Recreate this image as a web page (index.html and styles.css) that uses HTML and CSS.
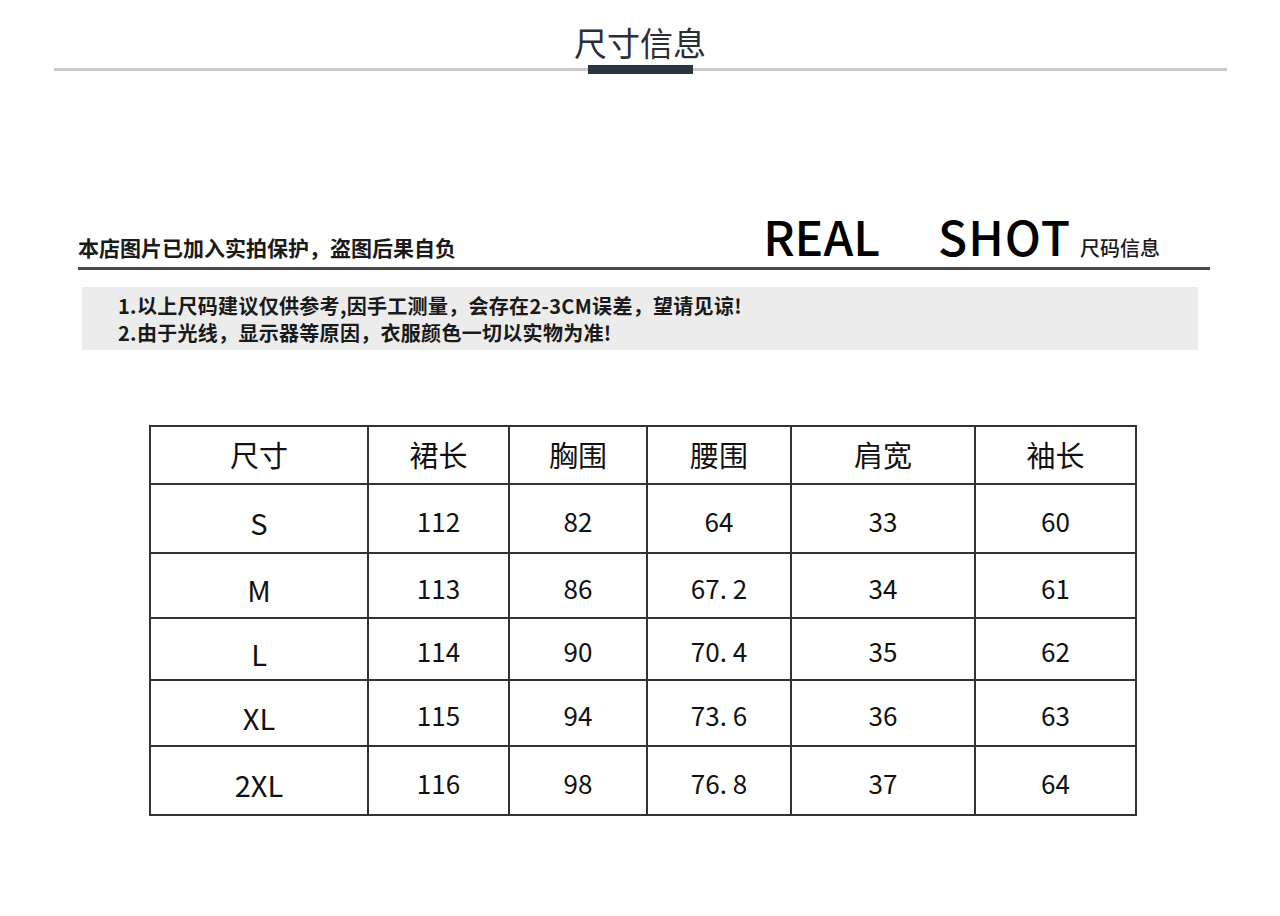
FILE: index.html
```html
<!DOCTYPE html>
<html lang="zh-CN">
<head>
<meta charset="utf-8">
<title>尺寸信息</title>
<link rel="stylesheet" href="styles.css">
</head>
<body>
<div class="page">
  <header class="top">
    <h1 class="title">尺寸信息</h1>
    <div class="title-rule"><span class="bar"></span></div>
  </header>

  <section class="banner">
    <p class="notice">本店图片已加入实拍保护，盗图后果自负</p>
    <div class="real">
      <span class="real-word">REAL</span><span class="real-word shot">SHOT</span><span class="real-sub">尺码信息</span>
    </div>
  </section>

  <div class="tips">
    <p>1.以上尺码建议仅供参考,因手工测量，会存在2-3CM误差，望请见谅!</p>
    <p>2.由于光线，显示器等原因，衣服颜色一切以实物为准!</p>
  </div>

  <table class="sizes">
    <colgroup>
      <col class="c1"><col class="c2"><col class="c3"><col class="c4"><col class="c5"><col class="c6">
    </colgroup>
    <thead>
      <tr class="r0"><th>尺寸</th><th>裙长</th><th>胸围</th><th>腰围</th><th>肩宽</th><th>袖长</th></tr>
    </thead>
    <tbody>
      <tr class="r1"><td class="sz">S</td><td>112</td><td>82</td><td>64</td><td>33</td><td>60</td></tr>
      <tr class="r2"><td class="sz">M</td><td>113</td><td>86</td><td>67. 2</td><td>34</td><td>61</td></tr>
      <tr class="r3"><td class="sz">L</td><td>114</td><td>90</td><td>70. 4</td><td>35</td><td>62</td></tr>
      <tr class="r4"><td class="sz">XL</td><td>115</td><td>94</td><td>73. 6</td><td>36</td><td>63</td></tr>
      <tr class="r5"><td class="sz">2XL</td><td>116</td><td>98</td><td>76. 8</td><td>37</td><td>64</td></tr>
    </tbody>
  </table>
</div>
</body>
</html>
```

FILE: styles.css
```css
html, body {
  margin: 0;
  padding: 0;
  background: #ffffff;
}

body {
  font-family: "Noto Sans CJK SC", "Noto Sans", sans-serif;
  color: #111;
}

.page {
  width: 1280px;
  height: 916px;
  overflow: hidden;
}

.top {
  padding-top: 20px;
}

.title {
  margin: 0;
  text-align: center;
  font-size: 33px;
  font-weight: 400;
  line-height: 45px;
  color: #2a2f36;
}

.title-rule {
  margin: 0 53px 0 54px;
  height: 9px;
  display: flex;
  justify-content: center;
  background: linear-gradient(#c9c9c9, #c9c9c9) center / 100% 3px no-repeat;
}

.bar {
  width: 105px;
  background: #2b3442;
}

.banner {
  margin: 143px 70px 0 78px;
  display: flex;
  align-items: flex-end;
  justify-content: space-between;
  border-bottom: 3px solid #4a4a4a;
  height: 50px;
}

.notice {
  margin: 0 0 7px 0;
  font-size: 21px;
  font-weight: 700;
  line-height: 26px;
  color: #1a1a1a;
}

.real {
  display: flex;
  align-items: baseline;
  margin-right: 50px;
  line-height: 46px;
  margin-bottom: -4px;
}

.real-word {
  font-size: 48px;
  font-weight: 500;
  color: #000;
}

.real-word.shot {
  margin-left: 58px;
  letter-spacing: 1px;
}

.real-sub {
  margin-left: 9px;
  font-size: 20px;
  font-weight: 500;
  color: #1a1a1a;
}

.tips {
  margin: 17px 82px 0 82px;
  width: 1116px;
  height: 63px;
  box-sizing: border-box;
  background: #ececec;
  padding: 5px 0 0 36px;
}

.tips p {
  margin: 0;
  font-size: 20px;
  font-weight: 700;
  line-height: 27px;
  color: #1a1a1a;
  letter-spacing: 0.3px;
}

.sizes {
  margin: 75px 0 0 149px;
  width: 986px;
  border-collapse: collapse;
  table-layout: fixed;
}

.c1 { width: 218px; }
.c2 { width: 141px; }
.c3 { width: 138px; }
.c4 { width: 144px; }
.c5 { width: 184px; }
.c6 { width: 161px; }

.sizes th,
.sizes td {
  border: 2px solid #333;
  padding: 0;
  text-align: center;
  vertical-align: middle;
  font-weight: 400;
  color: #111;
}

.sizes th {
  font-size: 29px;
  padding-bottom: 3px;
}

.sizes td {
  font-size: 26px;
  padding-top: 3px;
}

.sizes td.sz {
  font-size: 29px;
  padding-top: 7px;
}

.r0 { height: 58px; }
.r1 { height: 69px; }
.r2 { height: 65px; }
.r3 { height: 62px; }
.r4 { height: 66px; }
.r5 { height: 69px; }
```
